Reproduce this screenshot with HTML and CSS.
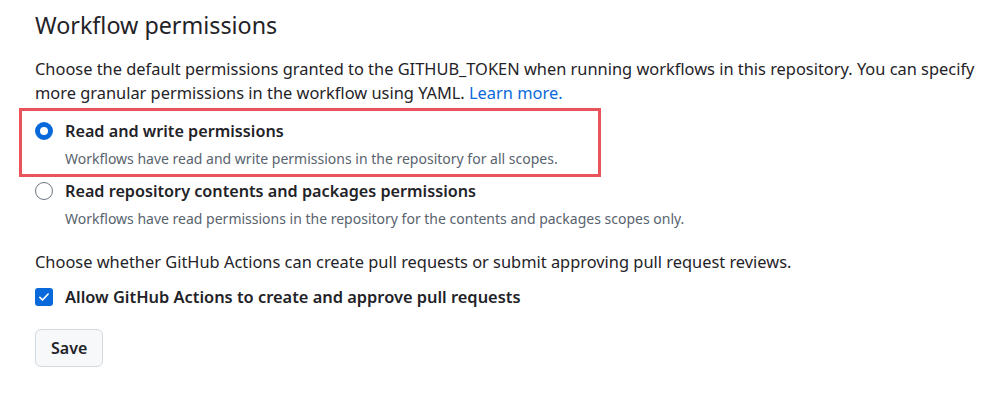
FILE: index.html
```html
<!DOCTYPE html>
<html lang="en">
<head>
    <meta charset="UTF-8">
    <title>Workflow permissions</title>
    <link rel="stylesheet" href="styles.css">
</head>
<body>
    <div class="settings">
        <h2 class="title">Workflow permissions</h2>
        <p class="lead">
            <span>Choose the default permissions granted to the GITHUB_TOKEN when running workflows in this repository. You can specify</span><br>
            <span>more granular permissions in the workflow using YAML.</span> <a href="#" class="link">Learn more.</a>
        </p>

        <label class="option highlighted">
            <input type="radio" name="perm" class="radio" checked>
            <span class="option-label">Read and write permissions</span>
            <span class="option-note">Workflows have read and write permissions in the repository for all scopes.</span>
        </label>

        <label class="option second">
            <input type="radio" name="perm" class="radio">
            <span class="option-label">Read repository contents and packages permissions</span>
            <span class="option-note">Workflows have read permissions in the repository for the contents and packages scopes only.</span>
        </label>

        <p class="lead pr-text">Choose whether GitHub Actions can create pull requests or submit approving pull request reviews.</p>

        <label class="check-row">
            <span class="checkbox">
                <svg width="12" height="12" viewBox="0 0 16 16"><path d="M2.5 8.5l3.5 3.5 7.5-8" fill="none" stroke="#fff" stroke-width="2.2" stroke-linecap="round" stroke-linejoin="round"/></svg>
            </span>
            <span class="option-label check-label">Allow GitHub Actions to create and approve pull requests</span>
        </label>

        <button class="save">Save</button>
    </div>
</body>
</html>
```

FILE: styles.css
```css
body {
    margin: 0;
    background: #fff;
    color: #1f2328;
    font-family: "Noto Sans", "Open Sans", sans-serif;
}
.settings {
    padding: 8px 0 0 35px;
    display: flex;
    flex-direction: column;
    align-items: flex-start;
}
.title {
    margin: 0;
    font-size: 23.3px;
    font-weight: 400;
    line-height: 34px;
}
.lead {
    margin: 15px 0 0;
    font-size: 16.4px;
    line-height: 24px;
    width: 960px;
}
.link {
    color: #0969da;
    text-decoration: none;
}
.option {
    position: relative;
    display: grid;
    grid-template-columns: 18px auto;
    column-gap: 12px;
    margin-top: 14px;
}
.option.second {
    margin-top: 9px;
}
.highlighted::after {
    content: "";
    position: absolute;
    left: -16px;
    top: -11px;
    width: 576px;
    height: 63px;
    border: 3px solid #e8545a;
}
.radio {
    appearance: none;
    margin: 3px 0 0;
    width: 18px;
    height: 18px;
    border: 1px solid #6e7781;
    border-radius: 50%;
    background: #fff;
}
.radio:checked {
    border: 5px solid #0969da;
}
.option-label {
    font-size: 16.2px;
    font-weight: 600;
    line-height: 24px;
}
.check-label {
    font-size: 16.4px;
}
.option-note {
    grid-column: 2;
    margin-top: 5px;
    font-size: 14px;
    line-height: 22px;
    color: #59636e;
}
.pr-text {
    margin-top: 20px;
}
.check-row {
    display: flex;
    align-items: center;
    gap: 12px;
    margin-top: 11px;
}
.checkbox {
    width: 18px;
    height: 18px;
    border-radius: 3px;
    background: #0969da;
    display: flex;
    justify-content: center;
    align-items: center;
}
.save {
    margin-top: 20px;
    height: 38px;
    padding: 0 15px;
    border: 1px solid #d1d9e0;
    border-radius: 6px;
    background: #f6f8fa;
    color: #1f2328;
    font-family: inherit;
    font-size: 16px;
    font-weight: 600;
}
```
